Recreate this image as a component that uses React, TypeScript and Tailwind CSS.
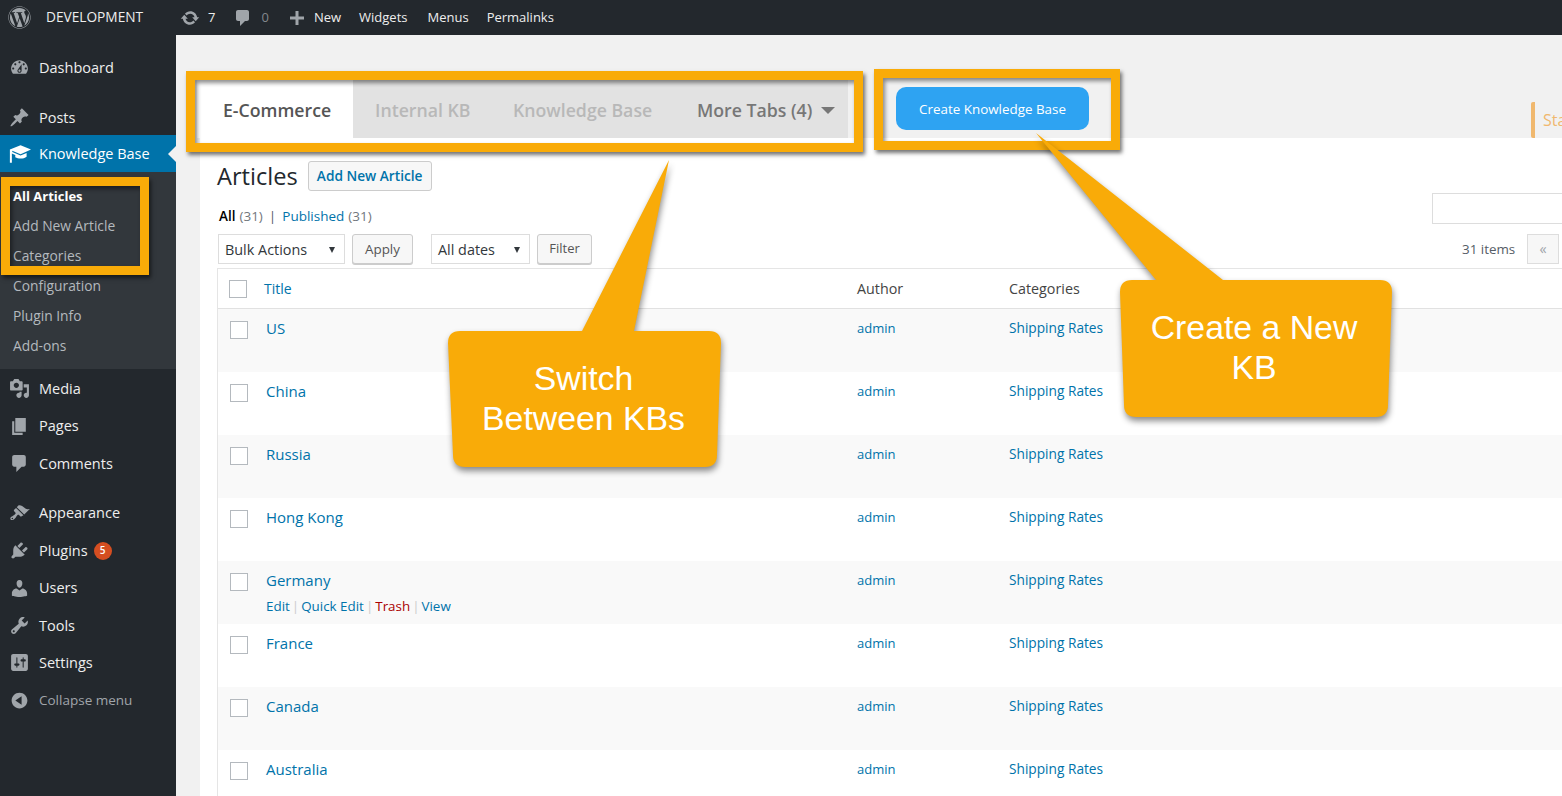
import { FaWordpress } from "react-icons/fa";

const icons: Record<string, string> = {
  dashboard:
    "M3.76 16h12.48c1.1-1.37 1.76-3.11 1.76-5 0-4.42-3.58-8-8-8s-8 3.58-8 8c0 1.89.66 3.63 1.76 5zM10 4c.55 0 1 .45 1 1s-.45 1-1 1-1-.45-1-1 .45-1 1-1zM6 6c.55 0 1 .45 1 1s-.45 1-1 1-1-.45-1-1 .45-1 1-1zm8 0c.55 0 1 .45 1 1s-.45 1-1 1-1-.45-1-1 .45-1 1-1zm-5.37 5.55L12 7v6c0 1.1-.9 2-2 2s-2-.9-2-2c0-.57.24-1.08.63-1.45zM4 10c.55 0 1 .45 1 1s-.45 1-1 1-1-.45-1-1 .45-1 1-1zm12 0c.55 0 1 .45 1 1s-.45 1-1 1-1-.45-1-1 .45-1 1-1zm-5 3c0-.55-.45-1-1-1s-1 .45-1 1 .45 1 1 1 1-.45 1-1z",
  posts:
    "M10.44 3.02l1.82-1.82 6.36 6.35-1.83 1.82c-1.05-.68-2.48-.57-3.41.36l-.75.75c-.92.93-1.04 2.35-.35 3.41l-1.83 1.82-2.41-2.41-2.8 2.79c-.42.42-3.38 2.71-3.8 2.29s1.86-3.39 2.28-3.81l2.79-2.79L4.1 9.36l1.83-1.82c1.05.69 2.48.57 3.4-.36l.75-.75c.93-.92 1.05-2.35.36-3.41z",
  cap: "M10.5 2L20 6 10.5 10.2 3 7v1.2l7.5 3.2 5.5-2.4v3.4c-1.4 1.2-3.4 1.8-5.5 1.8-1.8 0-3.5-.4-4.8-1.2v-2.2L2.6 9.6V18H.8V5.9L10.5 2z",
  media:
    "M13 11V4c0-.55-.45-1-1-1h-1.67L9 1H5L3.67 3H2c-.55 0-1 .45-1 1v7c0 .55.45 1 1 1h10c.55 0 1-.45 1-1zM7 4.5c1.38 0 2.5 1.12 2.5 2.5S8.38 9.5 7 9.5 4.5 8.38 4.5 7 5.62 4.5 7 4.5zM14 6h5v10.5c0 1.38-1.12 2.5-2.5 2.5S14 17.88 14 16.5s1.12-2.5 2.5-2.5c.17 0 .34.02.5.05V9h-3V6zm-4 8.05V13h2v3.5c0 1.38-1.12 2.5-2.5 2.5S7 17.88 7 16.5 8.12 14 9.5 14c.17 0 .34.02.5.05z",
  pages: "M6 15V2h10v13H6zm-1 1h8v2H3V5h2v11z",
  comments:
    "M5 2h9c1.1 0 2 .9 2 2v7c0 1.1-.9 2-2 2h-2l-5 5v-5H5c-1.1 0-2-.9-2-2V4c0-1.1.9-2 2-2z",
  appearance:
    "M14.48 11.06L7.41 3.99l1.5-1.5c.5-.56 2.3-.47 3.51.32 1.21.8 1.43 1.28 2.91 2.1 1.18.64 2.45 1.26 4.45.85zm-.71.71L6.7 4.7 4.93 6.47c-.39.39-.39 1.02 0 1.41l1.06 1.06c.39.39.39 1.03 0 1.42-.6.6-1.43 1.11-2.21 1.69-.35.26-.7.53-1.01.84C1.43 13.23.78 15 1.65 15.87s2.64.22 3.99-1.13c.31-.31.58-.66.84-1.01.58-.78 1.09-1.61 1.69-2.21.39-.39 1.03-.39 1.42 0l1.06 1.06c.39.39 1.02.39 1.41 0zM2.4 14.68c0-.41.33-.75.75-.75s.75.34.75.75-.33.75-.75.75-.75-.34-.75-.75z",
  plugins:
    "M13.11 4.36L9.87 7.6 8 5.73l3.24-3.24c.35-.34 1.05-.2 1.56.32.52.51.66 1.21.31 1.55zm-8 1.77l.91-1.12 9.01 9.01-1.19.84c-.71.71-2.63 1.16-3.82 1.16H6.14L4.9 17.26c-.59.59-1.54.59-2.12 0-.59-.58-.59-1.53 0-2.12l1.24-1.24v-3.88c0-1.13.4-3.19 1.09-3.89zm7.26 3.97l3.24-3.24c.34-.35 1.04-.21 1.55.31.52.51.66 1.21.31 1.55l-3.24 3.25z",
  users:
    "M10 9.25c-2.27 0-2.73-3.44-2.73-3.44C7 4.02 7.82 2 9.97 2c2.16 0 2.98 2.02 2.71 3.81 0 0-.41 3.44-2.68 3.44zm0 2.57L12.72 10c2.39 0 4.52 2.33 4.52 4.53v2.49s-3.65 1.13-7.24 1.13c-3.65 0-7.24-1.13-7.24-1.13v-2.49c0-2.25 1.94-4.48 4.47-4.48z",
  tools:
    "M16.68 9.77c-1.34 1.34-3.3 1.67-4.95.99l-5.41 6.52c-.99.99-2.59.99-3.58 0s-.99-2.59 0-3.57l6.52-5.42c-.68-1.65-.35-3.61.99-4.95 1.28-1.28 3.12-1.62 4.72-1.06l-2.89 2.89 2.82 2.82 2.86-2.87c.53 1.58.18 3.39-1.08 4.65zM3.81 16.21c.4.39 1.04.39 1.43 0 .4-.4.4-1.04 0-1.43-.39-.4-1.03-.4-1.43 0-.39.39-.39 1.03 0 1.43z",
  settings:
    "M18 16V4c0-1.1-.9-2-2-2H4c-1.1 0-2 .9-2 2v12c0 1.1.9 2 2 2h12c1.1 0 2-.9 2-2zM8 11h1c.55 0 1 .45 1 1s-.45 1-1 1H8v1.5c0 .28-.22.5-.5.5s-.5-.22-.5-.5V13H6c-.55 0-1-.45-1-1s.45-1 1-1h1V5.5c0-.28.22-.5.5-.5s.5.22.5.5V11zm5-2h-1c-.55 0-1-.45-1-1s.45-1 1-1h1V5.5c0-.28.22-.5.5-.5s.5.22.5.5V7h1c.55 0 1 .45 1 1s-.45 1-1 1h-1v5.5c0 .28-.22.5-.5.5s-.5-.22-.5-.5V9z",
  collapse:
    "M10 2.5c-4.14 0-7.5 3.36-7.5 7.5s3.36 7.5 7.5 7.5 7.5-3.36 7.5-7.5-3.36-7.5-7.5-7.5zM12 14l-6-4 6-4v8z",
  update:
    "M10.2 3.28c3.53 0 6.43 2.61 6.92 6h2.08l-3.5 4-3.5-4h2.32c-.45-1.97-2.21-3.45-4.32-3.45-1.45 0-2.73.71-3.54 1.78L4.95 5.66C6.23 4.2 8.11 3.28 10.2 3.28zm-.4 13.44c-3.52 0-6.43-2.61-6.92-6H.8l3.5-4c1.17 1.33 2.33 2.67 3.5 4H5.48c.45 1.97 2.21 3.45 4.32 3.45 1.45 0 2.73-.71 3.54-1.78l1.71 1.95c-1.28 1.46-3.15 2.38-5.25 2.38z",
  plus: "M17 8.5v3h-5.5V17h-3v-5.5H3v-3h5.5V3h3v5.5H17z",
};

const Icon = ({ name, className }: { name: string; className: string }) => (
  <svg viewBox="0 0 20 20" className={className} fill="currentColor">
    <path d={icons[name]} />
  </svg>
);

const MenuItem = ({ icon, label, badge }: { icon: string; label: string; badge?: string }) => (
  <div className="flex h-[37.4px] items-center pl-[9px] text-[#eeeeee]">
    <Icon name={icon} className="h-[21px] w-[21px] text-[#a0a5aa]" />
    <span className="ml-[9px]">{label}</span>
    {badge && (
      <span className="ml-[6px] flex h-[18px] w-[18px] items-center justify-center rounded-full bg-[#d54e21] text-[10px] font-semibold text-white">
        {badge}
      </span>
    )}
  </div>
);

const Sidebar = () => (
  <aside className="h-[761px] w-[176px] shrink-0 bg-[#23282d] pt-[14px] text-[14.5px]">
    <div className="h-[37px] overflow-hidden">
      <MenuItem icon="dashboard" label="Dashboard" />
    </div>
    <div className="mt-[13px] h-[36px] overflow-hidden">
      <MenuItem icon="posts" label="Posts" />
    </div>
    <div className="relative bg-[#0073aa]">
      <div className="flex h-[37px] items-center pl-[9px] text-white">
        <Icon name="cap" className="h-[22px] w-[22px] text-white" />
        <span className="ml-[8px] pt-[1px]">Knowledge Base</span>
      </div>
      <div className="absolute right-0 top-[11px] border-y-[8px] border-r-[8px] border-y-transparent border-r-[#f1f1f1]" />
    </div>
    <div className="bg-[#32373c] pb-[8px] pl-[13px] pt-[9px] text-[13.8px] text-[#b4b9be]">
      <div className="flex h-[30px] items-center pt-[1px] text-[13px] font-bold text-white">All Articles</div>
      <div className="flex h-[30px] items-center">Add New Article</div>
      <div className="flex h-[30px] items-center">Categories</div>
      <div className="flex h-[30px] items-center">Configuration</div>
      <div className="flex h-[30px] items-center">Plugin Info</div>
      <div className="flex h-[30px] items-center">Add-ons</div>
    </div>
    <div className="pt-[1px]">
      <MenuItem icon="media" label="Media" />
    </div>
    <MenuItem icon="pages" label="Pages" />
    <MenuItem icon="comments" label="Comments" />
    <div className="mt-[12.5px]">
      <MenuItem icon="appearance" label="Appearance" />
    </div>
    <MenuItem icon="plugins" label="Plugins" badge="5" />
    <MenuItem icon="users" label="Users" />
    <MenuItem icon="tools" label="Tools" />
    <MenuItem icon="settings" label="Settings" />
    <div className="flex h-[37.4px] items-center pl-[9px] text-[13.5px] text-[#a0a5aa]">
      <Icon name="collapse" className="h-[21px] w-[21px]" />
      <span className="ml-[9px]">Collapse menu</span>
    </div>
  </aside>
);

const TopBar = () => (
  <header className="flex h-[35px] items-center bg-[#23282d] text-[13px] text-[#eeeeee]">
    <FaWordpress className="ml-[8px] h-[23px] w-[23px] text-[#a0a5aa]" />
    <span className="ml-[15px] w-[97px] text-[13.7px]">DEVELOPMENT</span>
    <Icon name="update" className="ml-[37px] h-[20px] w-[20px] text-[#a0a5aa]" />
    <span className="ml-[8px]">7</span>
    <Icon name="comments" className="ml-[18px] h-[20px] w-[20px] text-[#a0a5aa]" />
    <span className="ml-[8px] text-[#82878c]">0</span>
    <Icon name="plus" className="ml-[18px] h-[20px] w-[20px] text-[#a0a5aa]" />
    <span className="ml-[7px]">New</span>
    <span className="ml-[18px]">Widgets</span>
    <span className="ml-[20px]">Menus</span>
    <span className="ml-[18px]">Permalinks</span>
  </header>
);

const KbHeader = () => (
  <div className="flex h-[103px] items-start bg-[#f1f1f1] pl-[21px] pt-[45px]">
    <div className="flex h-[58px] w-[651px] shrink-0 items-center whitespace-nowrap bg-[#e2e2e2] pt-[2px] text-[17.7px] font-semibold">
      <div className="-mt-[2px] flex h-[58px] w-[156px] shrink-0 items-center bg-white pl-[26px] pt-[2px] text-[#555555]">
        E-Commerce
      </div>
      <span className="ml-[22px] w-[93px] shrink-0 text-[#b8b8b8]">Internal KB</span>
      <span className="ml-[45px] w-[139px] shrink-0 text-[#b8b8b8]">Knowledge Base</span>
      <span className="ml-[45px] w-[116px] shrink-0 text-[#777777]">More Tabs (4)</span>
      <span className="ml-[8px] border-x-[7px] border-t-[7px] border-x-transparent border-t-[#777777]" />
    </div>
    <button className="ml-[48px] mt-[7px] h-[43px] w-[193px] shrink-0 rounded-[10px] bg-[#2ea3f2] pt-[1px] text-[13.4px] text-white">
      Create Knowledge Base
    </button>
    <div className="ml-[442px] mt-[22px] flex h-[36px] w-[40px] shrink-0 items-center rounded-l-[2px] border-l-[4px] border-[#f0b86e] pl-[8px] text-[16px] text-[#f0b86e]">
      <span>Sta</span>
    </div>
  </div>
);

const rows = ["US", "China", "Russia", "Hong Kong", "Germany", "France", "Canada", "Australia"];

const Checkbox = () => <div className="h-[18px] w-[18px] border border-[#b4b9be] bg-white" />;

const ArticlesTable = () => (
  <div className="mt-[4px] border-l border-t border-[#e5e5e5] text-[13px]">
    <div className="flex h-[40px] items-center border-b border-[#e1e1e1] bg-white">
      <div className="ml-[11px] w-[35px]">
        <Checkbox />
      </div>
      <div className="w-[593px] text-[14px] text-[#0073aa]">Title</div>
      <div className="w-[152px] text-[14.3px] text-[#444444]">Author</div>
      <div className="text-[14.3px] text-[#444444]">Categories</div>
    </div>
    {rows.map((name, i) => (
      <div key={name} className={i % 2 === 0 ? "flex h-[63px] bg-[#f9f9f9]" : "flex h-[63px] bg-white"}>
        <div className="ml-[12px] mt-[12px] w-[36px]">
          <Checkbox />
        </div>
        <div className="w-[591px] pt-[9px]">
          <div className="text-[15px] leading-[20px] text-[#0073aa]">{name}</div>
          {name === "Germany" && (
            <div className="mt-[6px] flex gap-[2px] text-[13.4px] leading-[20px] text-[#0073aa]">
              <span>Edit</span>
              <span className="text-[#ccc]">|</span>
              <span>Quick Edit</span>
              <span className="text-[#ccc]">|</span>
              <span className="text-[#a00]">Trash</span>
              <span className="text-[#ccc]">|</span>
              <span>View</span>
            </div>
          )}
        </div>
        <div className="w-[152px] pt-[10px] leading-[18px] text-[#0073aa]">admin</div>
        <div className="pt-[10px] text-[13.7px] leading-[18px] text-[#0073aa]">Shipping Rates</div>
      </div>
    ))}
  </div>
);

const Content = () => (
  <div className="ml-[24px] h-[658px] overflow-hidden bg-white pl-[17px]">
    <div className="flex h-[53px] items-center pt-[23px]">
      <h1 className="shrink-0 text-[23.6px] leading-[30px] text-[#23282d]">Articles</h1>
      <div className="ml-[10px] flex h-[30px] w-[124px] shrink-0 items-center justify-center rounded-[3px] border border-[#cccccc] bg-[#f7f7f7] text-[13.7px] font-semibold text-[#0073aa]">
        Add New Article
      </div>
      <div className="ml-[1000px] mt-[65px] h-[31px] w-[140px] shrink-0 border border-[#dddddd] bg-white" />
    </div>
    <div className="mt-[15px] flex h-[20px] items-center pl-[2px] text-[13.5px] text-[#555d66]">
      <span className="font-semibold text-black">All</span>
      <span className="ml-[4px] text-[#72777c]">(31)</span>
      <span className="ml-[6px] text-[#555d66]">|</span>
      <span className="ml-[6px] text-[#0073aa]">Published</span>
      <span className="ml-[4px] text-[#72777c]">(31)</span>
    </div>
    <div className="mt-[8px] flex h-[30px] items-center pl-[1px] text-[14.4px] text-[#32373c]">
      <div className="flex h-[30px] w-[127px] shrink-0 items-center justify-between border border-[#dddddd] bg-white pl-[6px] pr-[9px] pt-[1px]">
        Bulk Actions
        <span className="border-x-[3px] border-t-[6px] border-x-transparent border-t-[#32373c]" />
      </div>
      <div className="ml-[7px] flex h-[30px] w-[61px] shrink-0 items-center justify-center rounded-[3px] border border-[#cccccc] bg-[#f7f7f7] text-[13.4px] text-[#555555] shadow-[0_1px_0_#cccccc]">
        Apply
      </div>
      <div className="ml-[18px] flex h-[30px] w-[99px] shrink-0 items-center justify-between border border-[#dddddd] bg-white pl-[6px] pr-[9px] pt-[1px]">
        All dates
        <span className="border-x-[3px] border-t-[6px] border-x-transparent border-t-[#32373c]" />
      </div>
      <div className="ml-[7px] flex h-[30px] w-[55px] shrink-0 items-center justify-center rounded-[3px] border border-[#cccccc] bg-[#f7f7f7] text-[13px] text-[#555555] shadow-[0_1px_0_#cccccc]">
        Filter
      </div>
      <span className="ml-[870px] w-[54px] shrink-0 whitespace-nowrap text-[13.4px] text-[#555d66]">31 items</span>
      <div className="ml-[11px] flex h-[30px] w-[32px] shrink-0 items-center justify-center border border-[#dddddd] bg-[#f7f7f7] text-[#a0a5aa]">
        «
      </div>
    </div>
    <ArticlesTable />
  </div>
);

const frameClass =
  "absolute border-[9px] border-[#f9ab08] shadow-[2px_3px_4px_rgba(0,0,0,0.55),inset_2px_3px_4px_rgba(0,0,0,0.45)]";

const Annotations = () => (
  <>
    <div className={`${frameClass} left-[186px] top-[71px] h-[81px] w-[677px]`} />
    <div className={`${frameClass} left-[874px] top-[69px] h-[81px] w-[246px]`} />
    <div className={`${frameClass} left-[1px] top-[177px] h-[98px] w-[148px]`} />
    <svg
      viewBox="0 0 1562 796"
      className="absolute left-0 top-0 h-[796px] w-[1562px] drop-shadow-[1px_4px_3px_rgba(0,0,0,0.45)]"
    >
      <path
        fill="#f9ab08"
        d="M669 160L634 331L709 331Q721 331 721 343L717 455Q717 467 705 467L465 467Q453 467 453 455L448 343Q448 331 460 331L582 331Z"
      />
      <path
        fill="#f9ab08"
        d="M1036 133L1223 280L1380 280Q1392 280 1392 292L1388 405Q1388 417 1376 417L1136 417Q1124 417 1124 405L1120 292Q1120 280 1132 280L1156 280Z"
      />
    </svg>
    <div className="absolute left-[447px] top-[358px] w-[273px] text-center font-['Liberation_Sans',sans-serif] text-[33.8px] leading-[40px] text-white">
      Switch
      <br />
      Between KBs
    </div>
    <div className="absolute left-[1120px] top-[307px] w-[268px] text-center font-['Liberation_Sans',sans-serif] text-[33.8px] leading-[40px] text-white">
      Create a New
      <br />
      KB
    </div>
  </>
);

export default function App() {
  return (
    <div className="relative h-[796px] w-[1562px] overflow-hidden bg-[#f1f1f1] font-['Open_Sans',sans-serif]">
      <TopBar />
      <div className="flex">
        <Sidebar />
        <main className="min-w-0 flex-1 overflow-hidden">
          <KbHeader />
          <Content />
        </main>
      </div>
      <Annotations />
    </div>
  );
}
